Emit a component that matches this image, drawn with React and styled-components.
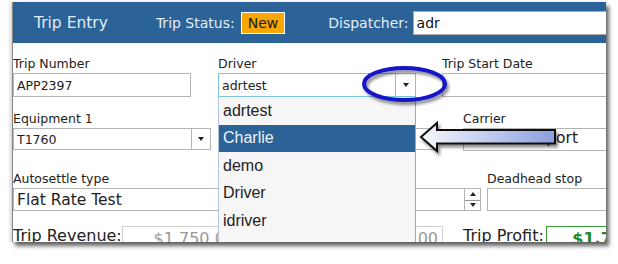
import React from 'react';
import styled, { createGlobalStyle } from 'styled-components';

const GlobalStyle = createGlobalStyle`
  body {
    margin: 0;
    background: #ffffff;
    font-family: "DejaVu Sans", Verdana, sans-serif;
  }
`;

const BLUE = '#2b6398';

const Page = styled.div`
  position: relative;
  width: 618px;
  height: 264px;
  box-sizing: border-box;
  padding: 2px 0 0 12px;
  overflow: hidden;
`;

const Panel = styled.div`
  width: 594px;
  height: 240px;
  background: #fff;
  border-left: 1px solid #8a8a8a;
  box-sizing: border-box;
  overflow: hidden;
  box-shadow: 3px 4px 4px rgba(0, 0, 0, 0.6), -2px 0 3px rgba(0, 0, 0, 0.15);
`;

const Header = styled.div`
  height: 41px;
  background: ${BLUE};
  display: flex;
  align-items: center;
  padding-left: 21px;
  white-space: nowrap;
`;

const Title = styled.div`
  color: #e4ecf5;
  font-size: 15.5px;
  width: 76px;
  margin-right: 48px;
`;

const HeadLabel = styled.div`
  color: #e4ecf5;
  font-size: 14px;
  margin-left: ${p => p.$ml || 0}px;
`;

const Badge = styled.div`
  margin-left: 6px;
  height: 22px;
  box-sizing: border-box;
  padding: 0 6px;
  display: flex;
  align-items: center;
  background: #f9a602;
  border: 1px solid #fff;
  color: #1a1a1a;
  font-size: 14px;
`;

const HeadInput = styled.div`
  margin-left: 4px;
  flex: none;
  width: 210px;
  height: 24px;
  box-sizing: border-box;
  background: #fff;
  border: 1px solid #a9a9a9;
  color: #111;
  font-size: 14px;
  padding-left: 3px;
  display: flex;
  align-items: center;
`;

const Body = styled.div`
  padding-top: 13px;
`;

const Row = styled.div`
  display: flex;
  align-items: flex-start;
  margin-top: ${p => p.$mt || 0}px;
  white-space: nowrap;
`;

const Field = styled.div`
  position: relative;
  flex: none;
  width: ${p => p.$w}px;
  margin-left: ${p => p.$ml || 0}px;
`;

const Label = styled.div`
  font-size: 12.5px;
  line-height: 15px;
  height: 15px;
  color: #222;
  margin-bottom: 2px;
`;

const Input = styled.div`
  height: ${p => p.$h || 24}px;
  box-sizing: border-box;
  border: 1px solid ${p => p.$border || '#b4b4b4'};
  background: #fff;
  display: flex;
  align-items: center;
  padding: 0 ${p => (p.$right ? 4 : 0)}px ${p => p.$pb || 0}px 3px;
  justify-content: ${p => (p.$right ? 'flex-end' : 'flex-start')};
  font-size: ${p => p.$fs || 12.5}px;
  font-weight: ${p => (p.$bold ? 700 : 400)};
  color: ${p => p.$color || '#222'};
  overflow: hidden;
`;

const InputText = styled.span`
  flex: 1;
  overflow: hidden;
`;

const Squiggle = styled.span`
  text-decoration: underline wavy #e02020;
  text-decoration-thickness: 1px;
  text-underline-offset: 2px;
`;

const DropButton = styled.div`
  flex: none;
  width: ${p => p.$w || 18}px;
  align-self: stretch;
  border-left: 1px solid ${p => p.$line || '#b4b4b4'};
  display: flex;
  align-items: center;
  justify-content: center;
`;

const Caret = styled.span`
  width: 0;
  height: 0;
  border-left: 3.5px solid transparent;
  border-right: 3.5px solid transparent;
  border-top: 4px solid #222;
  ${p => p.$up && 'border-top: none; border-bottom: 4px solid #222;'}
`;

const Spinner = styled.div`
  flex: none;
  width: 16px;
  align-self: stretch;
  margin-right: -1px;
  border-left: 1px solid #b4b4b4;
  display: grid;
  grid-template-rows: 1fr 1fr;
`;

const SpinHalf = styled.div`
  display: flex;
  align-items: center;
  justify-content: center;
  border-top: ${p => (p.$bottom ? '1px solid #9a9a9a' : 'none')};
`;

const List = styled.div`
  position: absolute;
  top: 100%;
  left: 0;
  width: 198px;
  height: 160px;
  box-sizing: border-box;
  background: #f6f6f6;
  border-left: 1px solid #b7c6d6;
  border-right: 1px solid #7fb0d8;
  z-index: 2;
`;

const Item = styled.div`
  height: 27.5px;
  display: flex;
  align-items: center;
  padding-left: 4px;
  font-family: "Liberation Sans", Arial, sans-serif;
  font-size: 16px;
  color: ${p => (p.$active ? '#eef3f8' : '#222')};
  background: ${p => (p.$active ? BLUE : 'transparent')};
`;

const BigLabel = styled.div`
  flex: none;
  font-size: 16px;
  line-height: 20px;
  color: #222;
  margin-left: ${p => p.$ml || 0}px;
  width: ${p => p.$w}px;
`;

const Overlay = styled.svg`
  position: absolute;
  left: 0;
  top: 0;
  pointer-events: none;
  z-index: 5;
`;

const drivers = ['adrtest', 'Charlie', 'demo', 'Driver', 'idriver'];

export default function App() {
  return (
    <Page>
      <GlobalStyle />
      <Panel>
        <Header>
          <Title>Trip Entry</Title>
          <HeadLabel>Trip Status:</HeadLabel>
          <Badge>New</Badge>
          <HeadLabel $ml={43}>Dispatcher:</HeadLabel>
          <HeadInput>adr</HeadInput>
        </Header>

        <Body>
          <Row>
            <Field $w={178}>
              <Label>Trip Number</Label>
              <Input>APP2397</Input>
            </Field>
            <Field $w={198} $ml={27}>
              <Label>Driver</Label>
              <Input $border="#7cc6e2">
                <InputText><Squiggle>adrtest</Squiggle></InputText>
                <DropButton $w={19} $line="#7cc6e2"><Caret /></DropButton>
              </Input>
              <List>
                {drivers.map(d => (
                  <Item key={d} $active={d === 'Charlie'}>{d}</Item>
                ))}
              </List>
            </Field>
            <Field $w={180} $ml={26}>
              <Label>Trip Start Date</Label>
              <Input />
            </Field>
          </Row>

          <Row $mt={14}>
            <Field $w={198}>
              <Label>Equipment 1</Label>
              <Input $h={22}>
                <InputText>T1760</InputText>
                <DropButton><Caret /></DropButton>
              </Input>
            </Field>
            <Field $w={197} $ml={29}>
              <Label />
              <Input $h={22}>
                <InputText />
                <DropButton $w={20} />
              </Input>
            </Field>
            <Field $w={160} $ml={26}>
              <Label>Carrier</Label>
              <Input $h={23} $fs={15.5} $pb={4}>ADR Transport</Input>
            </Field>
          </Row>

          <Row $mt={20}>
            <Field $w={217}>
              <Label>Autosettle type</Label>
              <Input $h={23} $fs={15.5}>Flat Rate Test</Input>
            </Field>
            <Field $w={241} $ml={10}>
              <Label />
              <Input $h={23}>
                <InputText />
                <Spinner>
                  <SpinHalf><Caret $up /></SpinHalf>
                  <SpinHalf $bottom><Caret /></SpinHalf>
                </Spinner>
              </Input>
            </Field>
            <Field $w={130} $ml={6}>
              <Label>Deadhead stop</Label>
              <Input $h={23} />
            </Field>
          </Row>

          <Row $mt={15}>
            <BigLabel $w={109}>Trip Revenue:</BigLabel>
            <Field $w={118}>
              <Input $right $fs={16} $color="#9a9a9a" $border="#d0d0d0">$1,750.00</Input>
            </Field>
            <Field $w={193} $ml={10}>
              <Input $right $fs={16} $color="#9a9a9a" $border="#d0d0d0">$0.00</Input>
            </Field>
            <BigLabel $ml={20} $w={83}>Trip Profit:</BigLabel>
            <Field $w={80}>
              <Input $fs={16} $bold $color="#1f8a1f" $border="#3c9a3c">&nbsp;&nbsp;&nbsp;&nbsp;$1,750.00</Input>
            </Field>
          </Row>
        </Body>
      </Panel>

      <Overlay width="618" height="264" viewBox="0 0 618 264">
        <defs>
          <linearGradient id="arrowFill" x1="0" y1="0" x2="1" y2="0">
            <stop offset="0" stopColor="#f6f8fd" />
            <stop offset="1" stopColor="#8b9fdf" />
          </linearGradient>
          <filter id="soft" x="-20%" y="-40%" width="140%" height="180%">
            <feDropShadow dx="2" dy="3" stdDeviation="1.6" floodColor="#000" floodOpacity="0.45" />
          </filter>
        </defs>
        <ellipse cx="404.5" cy="84" rx="40.5" ry="16" fill="none" stroke="#1515c9" strokeWidth="4" filter="url(#soft)" />
        <polygon
          points="421,137 437,123 437,130 555,130 555,143.5 437,143.5 437,151"
          fill="url(#arrowFill)"
          stroke="#111"
          strokeWidth="2"
          strokeLinejoin="miter"
          filter="url(#soft)"
        />
      </Overlay>
    </Page>
  );
}
